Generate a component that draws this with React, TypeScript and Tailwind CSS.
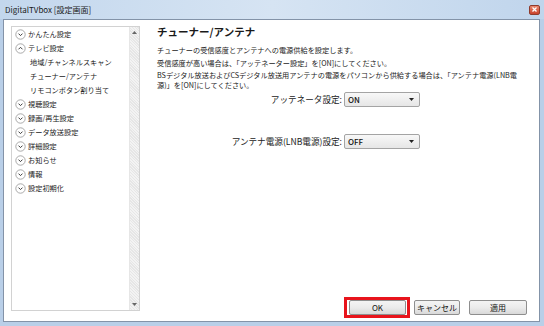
import React from 'react';

type NavItem = { label: string; open?: boolean; sub?: boolean };

const navItems: NavItem[] = [
  { label: 'かんたん設定' },
  { label: 'テレビ設定', open: true },
  { label: '地域/チャンネルスキャン', sub: true },
  { label: 'チューナー/アンテナ', sub: true },
  { label: 'リモコンボタン割り当て', sub: true },
  { label: '視聴設定' },
  { label: '録画/再生設定' },
  { label: 'データ放送設定' },
  { label: '詳細設定' },
  { label: 'お知らせ' },
  { label: '情報' },
  { label: '設定初期化' },
];

const font = { fontFamily: '"Noto Sans CJK JP", "Noto Sans", sans-serif' };

function Toggle({ open }: { open?: boolean }) {
  return (
    <svg width="11" height="11" viewBox="0 0 11 11" className="shrink-0">
      <circle cx="5.5" cy="5.5" r="4.7" fill="#fff" stroke="#949494" strokeWidth="0.8" />
      {open ? (
        <polyline points="3.5,6.3 5.5,4.3 7.5,6.3" fill="none" stroke="#3a3a3a" strokeWidth="1" />
      ) : (
        <polyline points="3.5,4.6 5.5,6.6 7.5,4.6" fill="none" stroke="#3a3a3a" strokeWidth="1" />
      )}
    </svg>
  );
}

function Select({ value }: { value: string }) {
  return (
    <div className="w-[76px] h-[15px] flex items-center justify-between pl-[3px] pr-[5px] border border-[#a4a4a4] rounded-[2px] bg-gradient-to-b from-[#f8f8f8] to-[#e6e6e6] text-[8px] text-[#111]">
      <span className="font-medium">{value}</span>
      <svg width="5" height="3" viewBox="0 0 5 3">
        <polygon points="0,0 5,0 2.5,3" fill="#222" />
      </svg>
    </div>
  );
}

function Button({ children }: { children: React.ReactNode }) {
  return (
    <div className="h-[15px] flex items-center justify-center border border-[#8e8e8e] rounded-[2px] bg-gradient-to-b from-[#f4f4f4] via-[#ebebeb] to-[#d9d9d9] text-[8px] text-[#111]">
      {children}
    </div>
  );
}

export default function App() {
  return (
    <div className="w-[544px] h-[326px] flex flex-col bg-[#b9cfe8] overflow-hidden" style={font}>
      {/* Title bar */}
      <div className="h-[19px] flex items-center justify-between pl-[5px] pr-[4px] bg-gradient-to-r from-[#c3d7ed] via-[#d6e4f3] to-[#c0d5ec]">
        <span className="text-[8px] text-[#1a1a1a]">DigitalTVbox [設定画面]</span>
        <div className="w-[11px] h-[10px] rounded-[2px] bg-gradient-to-b from-[#e9876f] to-[#c8402a] border border-[#8e3a2c] flex items-center justify-center">
          <svg width="5" height="5" viewBox="0 0 5 5">
            <path d="M0.5 0.5 L4.5 4.5 M4.5 0.5 L0.5 4.5" stroke="#fff" strokeWidth="1.3" />
          </svg>
        </div>
      </div>

      {/* Client area */}
      <div className="ml-[3px] mr-[4px] h-[303px] border border-[#8393a8] bg-white flex">
        {/* Tree list */}
        <div className="ml-[7px] mt-[6px] w-[129px] h-[285px] border border-[#d2d2d2] flex">
          <div className="flex-1 flex flex-col">
            {navItems.map((it) => (
              <div key={it.label} className="h-[14px] flex items-center text-[7.2px] leading-[10px] text-[#222]">
                {it.sub ? (
                  <span className="pl-[18px]">{it.label}</span>
                ) : (
                  <span className="flex items-center gap-[2px] pl-[3px]">
                    <Toggle open={it.open} />
                    <span>{it.label}</span>
                  </span>
                )}
              </div>
            ))}
          </div>
          <div className="w-[10px] flex flex-col justify-between items-center py-[4px] border-l border-[#e6e6e6] bg-[repeating-linear-gradient(45deg,#f3f3f3_0px,#f3f3f3_1px,#e6e6e6_1px,#e6e6e6_2px)]">
            <svg width="5" height="3" viewBox="0 0 5 3">
              <polygon points="0,3 5,3 2.5,0" fill="#666" />
            </svg>
            <svg width="5" height="3" viewBox="0 0 5 3">
              <polygon points="0,0 5,0 2.5,3" fill="#666" />
            </svg>
          </div>
        </div>

        {/* Settings pane */}
        <div className="ml-[17px] flex-1 flex flex-col pr-[12px] pb-[6px] text-[#1a1a1a]">
          <h1 className="mt-[5px] text-[10.5px] font-bold leading-[14px]">チューナー/アンテナ</h1>
          <div className="mt-[6px] flex flex-col gap-[2.5px] text-[7.2px] whitespace-nowrap">
            <p className="leading-[10px]">チューナーの受信感度とアンテナへの電源供給を設定します。</p>
            <p className="leading-[10px]">受信感度が高い場合は、「アッテネーター設定」を[ON]にしてください。</p>
            <p className="leading-[10px]">
              BSデジタル放送およびCSデジタル放送用アンテナの電源をパソコンから供給する場合は、「アンテナ電源(LNB電
              <br />
              源)」を[ON]にしてください。
            </p>
          </div>

          <div className="mt-[2px] grid grid-cols-[185px_76px] gap-x-[2px] gap-y-[27px] items-center text-[8.6px] leading-[15px]">
            <span className="text-right">アッテネータ設定:</span>
            <Select value="ON" />
            <span className="text-right">アンテナ電源(LNB電源)設定:</span>
            <Select value="OFF" />
          </div>

          <div className="mt-auto flex justify-end gap-[7px]">
            <div className="relative w-[57px]">
              <Button>OK</Button>
              <span className="absolute -left-[5px] -right-[4px] -top-[3px] -bottom-[3px] border-[3px] border-[#e8141c]" />
            </div>
            <div className="w-[46px] ml-[1px]">
              <Button>キャンセル</Button>
            </div>
            <div className="w-[58px] ml-[2px]">
              <Button>適用</Button>
            </div>
          </div>
        </div>
      </div>
    </div>
  );
}
